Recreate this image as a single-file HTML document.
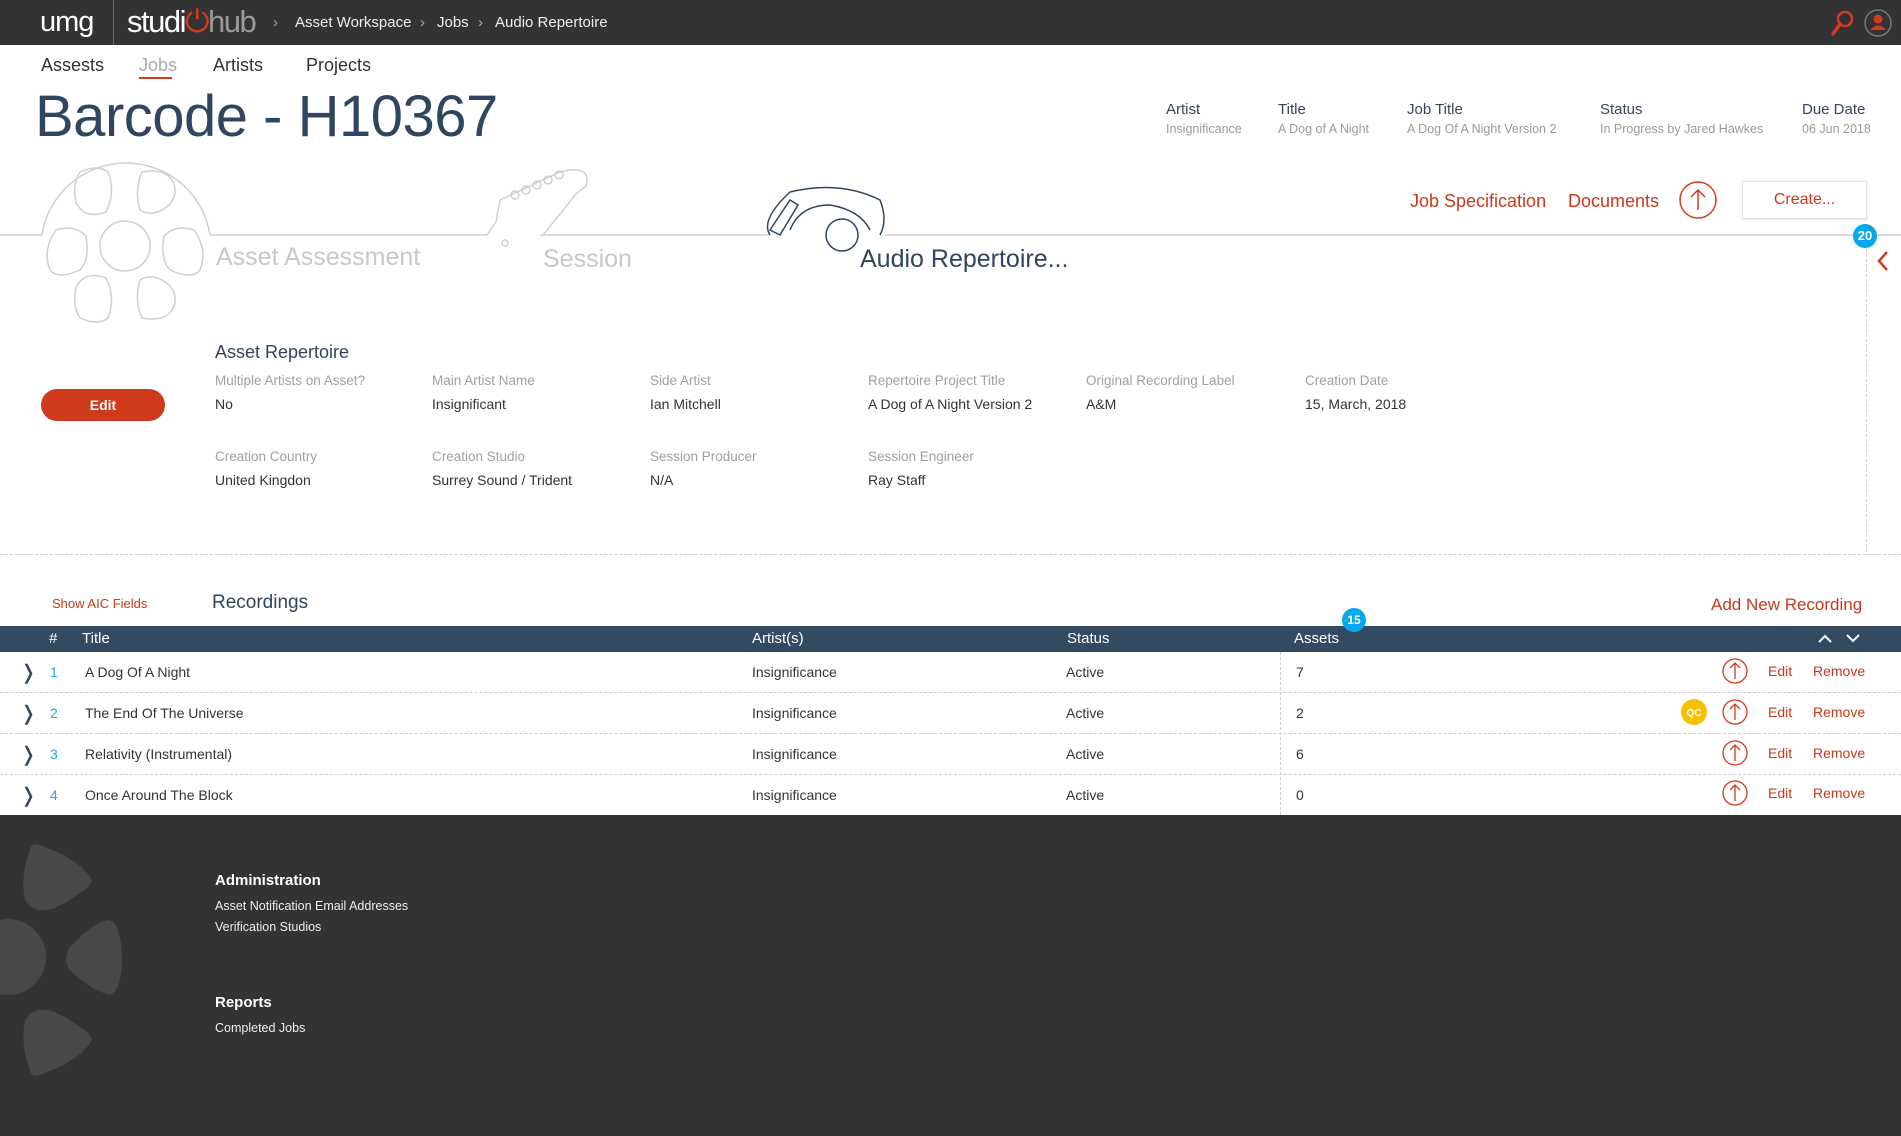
<!DOCTYPE html>
<html><head><meta charset="utf-8"><style>
*{margin:0;padding:0;box-sizing:border-box}
body{width:1901px;height:1136px;position:relative;background:#fff;font-family:"Liberation Sans",sans-serif;overflow:hidden;color:#333}
.a{position:absolute;white-space:nowrap}
.top{position:absolute;left:0;top:0;width:1901px;height:45px;background:#333}
.red{color:#c9381c}
.lbl{font-size:13.5px;color:#a0a0a0}
.val{font-size:14px;color:#333}
.ml{font-size:15px;color:#34465e}
.mv{font-size:12.5px;color:#9a9a9a}
.row{position:absolute;left:0;width:1901px;height:41px;border-bottom:1px dashed #ccc}
.row span{position:absolute;top:12px;font-size:14px;color:#333}
.foot{position:absolute;left:0;top:815px;width:1901px;height:321px;background:#333}
</style></head><body>
<div class="top"></div>
<div class="a" style="left:40px;top:6px;font-size:29px;color:#fff;letter-spacing:-1px">umg</div>
<div class="a" style="left:113px;top:0;width:1px;height:45px;background:#666"></div>
<div class="a" style="left:127px;top:4px;font-size:31px;color:#fff;letter-spacing:-1.5px">studi<span style="color:#d63a1e">&#x23FB;</span><span style="color:#999">hub</span></div>
<div class="a" style="left:273px;top:14px;font-size:15px;color:#aaa">›</div>
<div class="a" style="left:295px;top:14px;font-size:15px;color:#eee">Asset Workspace</div>
<div class="a" style="left:420px;top:14px;font-size:15px;color:#aaa">›</div>
<div class="a" style="left:437px;top:14px;font-size:15px;color:#eee">Jobs</div>
<div class="a" style="left:478px;top:14px;font-size:15px;color:#aaa">›</div>
<div class="a" style="left:495px;top:14px;font-size:15px;color:#eee">Audio Repertoire</div>
<svg class="a" style="left:1830px;top:9px" width="26" height="28"><circle cx="15" cy="10" r="7" fill="none" stroke="#d63a1e" stroke-width="2.5"/><line x1="10" y1="15" x2="3" y2="25" stroke="#d63a1e" stroke-width="3.5" stroke-linecap="round"/></svg>
<svg class="a" style="left:1863px;top:8px" width="30" height="30"><circle cx="15" cy="15" r="13" fill="none" stroke="#777" stroke-width="1.5"/><circle cx="15" cy="11" r="4.5" fill="#d63a1e"/><path d="M7 22 Q15 13 23 22 Z" fill="#d63a1e"/></svg>

<div class="a" style="left:41px;top:55px;font-size:18px;color:#333">Assests</div>
<div class="a" style="left:139px;top:55px;font-size:18px;color:#aaa">Jobs</div>
<div class="a" style="left:139px;top:77px;width:33px;height:2px;background:#d63a1e"></div>
<div class="a" style="left:213px;top:55px;font-size:18px;color:#333">Artists</div>
<div class="a" style="left:306px;top:55px;font-size:18px;color:#333">Projects</div>
<div class="a" style="left:35px;top:83px;font-size:58px;color:#2f4560;letter-spacing:-0.5px">Barcode - H10367</div>

<div class="a ml" style="left:1166px;top:101px">Artist</div><div class="a mv" style="left:1166px;top:122px">Insignificance</div>
<div class="a ml" style="left:1278px;top:101px">Title</div><div class="a mv" style="left:1278px;top:122px">A Dog of A Night</div>
<div class="a ml" style="left:1407px;top:101px">Job Title</div><div class="a mv" style="left:1407px;top:122px">A Dog Of A Night Version 2</div>
<div class="a ml" style="left:1600px;top:101px">Status</div><div class="a mv" style="left:1600px;top:122px">In Progress by Jared Hawkes</div>
<div class="a ml" style="left:1802px;top:101px">Due Date</div><div class="a mv" style="left:1802px;top:122px">06 Jun 2018</div>

<svg class="a" style="left:0;top:150px" width="1901" height="180">
<g fill="none" stroke="#cfcfcf" stroke-width="1.5">
<path d="M0 85 H42 M210 85 H487 M540 85 H770 M885 85 H1901"/>
<path d="M42 85 A85 85 0 0 1 210 85"/>
<circle cx="125" cy="96" r="25"/>
<path d="M80 22 q18 -8 28 0 q8 20 -2 40 q-22 8 -30 -10 q-4 -18 4 -30z"/>
<path d="M142 22 q22 -4 30 8 q8 14 -4 26 q-16 12 -28 4 q-6 -20 2 -38z"/>
<path d="M56 80 q18 -6 30 6 q4 24 -6 34 q-22 10 -30 0 q-8 -20 6 -40z"/>
<path d="M194 80 q-18 -6 -30 6 q-4 24 6 34 q22 10 30 0 q8 -20 -6 -40z"/>
<path d="M80 168 q18 8 28 0 q8 -20 -2 -40 q-22 -8 -30 10 q-4 18 4 30z"/>
<path d="M142 168 q22 4 30 -8 q8 -14 -4 -26 q-16 -12 -28 -4 q-6 20 2 38z"/>
<path d="M487 85 L496 72 L500 50 L560 22 Q592 14 586 36 L576 44 L543 85"/>
<circle cx="505" cy="93" r="3"/>
<circle cx="515" cy="45" r="4"/><circle cx="526" cy="40" r="4"/><circle cx="537" cy="35" r="4"/><circle cx="548" cy="30" r="4"/><circle cx="559" cy="25" r="4"/>
</g>
<g fill="none" stroke="#2f4560" stroke-width="1.5">
<path d="M770 85 Q760 70 790 42 Q840 30 880 50 Q888 70 880 85"/>
<path d="M790 80 Q800 55 830 55 Q860 60 870 80"/>
<path d="M770 80 L790 50 L798 55 L780 85z"/>
<circle cx="842" cy="85" r="16"/>
</g>
</svg>
<div class="a" style="left:216px;top:243px;font-size:25px;color:#c8c8c8">Asset Assessment</div>
<div class="a" style="left:543px;top:245px;font-size:25px;color:#c8c8c8">Session</div>
<div class="a" style="left:860px;top:245px;font-size:25px;color:#2f4560">Audio Repertoire...</div>

<div class="a red" style="left:1410px;top:191px;font-size:18px">Job Specification</div>
<div class="a red" style="left:1568px;top:191px;font-size:18px">Documents</div>
<svg class="a" style="left:1678px;top:180px" width="40" height="40"><circle cx="20" cy="20" r="18" fill="none" stroke="#d63a1e" stroke-width="1.5"/><path d="M20 30 V10 M13 17 L20 10 L27 17" fill="none" stroke="#d63a1e" stroke-width="1.5"/></svg>
<div class="a" style="left:1742px;top:181px;width:125px;height:38px;border:1px solid #e3e3e3;box-shadow:0 1px 3px rgba(0,0,0,.12);font-size:16px;color:#c9381c;text-align:center;line-height:36px">Create...</div>
<div class="a" style="left:1866px;top:249px;height:303px;border-left:1px dashed #ccc"></div>
<div class="a" style="left:1853px;top:224px;width:24px;height:24px;border-radius:50%;background:#05a8ec;color:#fff;font-size:13px;font-weight:bold;text-align:center;line-height:24px">20</div>
<svg class="a" style="left:1876px;top:250px" width="14" height="22"><path d="M11 2 L3 11 L11 20" fill="none" stroke="#d63a1e" stroke-width="2.5"/></svg>

<div class="a" style="left:215px;top:342px;font-size:18px;color:#2f4560">Asset Repertoire</div>
<div class="a" style="left:41px;top:389px;width:124px;height:32px;border-radius:16px;background:#cf3a1c;color:#fff;font-size:14px;font-weight:bold;text-align:center;line-height:32px">Edit</div>
<div class="a lbl" style="left:215px;top:373px">Multiple Artists on Asset?</div><div class="a val" style="left:215px;top:396px">No</div>
<div class="a lbl" style="left:432px;top:373px">Main Artist Name</div><div class="a val" style="left:432px;top:396px">Insignificant</div>
<div class="a lbl" style="left:650px;top:373px">Side Artist</div><div class="a val" style="left:650px;top:396px">Ian Mitchell</div>
<div class="a lbl" style="left:868px;top:373px">Repertoire Project Title</div><div class="a val" style="left:868px;top:396px">A Dog of A Night Version 2</div>
<div class="a lbl" style="left:1086px;top:373px">Original Recording Label</div><div class="a val" style="left:1086px;top:396px">A&amp;M</div>
<div class="a lbl" style="left:1305px;top:373px">Creation Date</div><div class="a val" style="left:1305px;top:396px">15, March, 2018</div>
<div class="a lbl" style="left:215px;top:449px">Creation Country</div><div class="a val" style="left:215px;top:472px">United Kingdon</div>
<div class="a lbl" style="left:432px;top:449px">Creation Studio</div><div class="a val" style="left:432px;top:472px">Surrey Sound / Trident</div>
<div class="a lbl" style="left:650px;top:449px">Session Producer</div><div class="a val" style="left:650px;top:472px">N/A</div>
<div class="a lbl" style="left:868px;top:449px">Session Engineer</div><div class="a val" style="left:868px;top:472px">Ray Staff</div>
<div class="a" style="left:0;top:554px;width:1901px;border-top:1px dashed #ccc"></div>

<div class="a red" style="left:52px;top:596px;font-size:13px">Show AIC Fields</div>
<div class="a" style="left:212px;top:592px;font-size:19px;color:#2f4560">Recordings</div>
<div class="a red" style="left:1711px;top:595px;font-size:17px">Add New Recording</div>

<div class="a" style="left:0;top:626px;width:1901px;height:26px;background:#334a63"></div>
<div class="a" style="left:49px;top:630px;font-size:15px;color:#fff">#</div>
<div class="a" style="left:82px;top:630px;font-size:15px;color:#fff">Title</div>
<div class="a" style="left:752px;top:630px;font-size:15px;color:#fff">Artist(s)</div>
<div class="a" style="left:1067px;top:630px;font-size:15px;color:#fff">Status</div>
<div class="a" style="left:1294px;top:630px;font-size:15px;color:#fff">Assets</div>
<div class="a" style="left:1342px;top:608px;width:24px;height:24px;border-radius:50%;background:#05a8ec;color:#fff;font-size:12px;font-weight:bold;text-align:center;line-height:24px">15</div>
<svg class="a" style="left:1817px;top:631px" width="44" height="14"><path d="M2 11 L8 5 L14 11 M30 4 L36 10 L42 4" fill="none" stroke="#fff" stroke-width="2"/></svg>

<div class="a" style="left:1280px;top:652px;height:163px;border-left:1px dashed #ccc"></div>

<div class="row" style="top:652px"><span style="left:20px;top:8px;font-size:20px;color:#34465e">&#x276D;</span><span style="left:50px;color:#1ea6e8">1</span><span style="left:85px">A Dog Of A Night</span><span style="left:752px">Insignificance</span><span style="left:1066px">Active</span><span style="left:1296px">7</span></div>
<div class="row" style="top:693px"><span style="left:20px;top:8px;font-size:20px;color:#34465e">&#x276D;</span><span style="left:50px;color:#1ea6e8">2</span><span style="left:85px">The End Of The Universe</span><span style="left:752px">Insignificance</span><span style="left:1066px">Active</span><span style="left:1296px">2</span></div>
<div class="row" style="top:734px"><span style="left:20px;top:8px;font-size:20px;color:#34465e">&#x276D;</span><span style="left:50px;color:#1ea6e8">3</span><span style="left:85px">Relativity (Instrumental)</span><span style="left:752px">Insignificance</span><span style="left:1066px">Active</span><span style="left:1296px">6</span></div>
<div class="row" style="top:775px;border-bottom:none"><span style="left:20px;top:8px;font-size:20px;color:#34465e">&#x276D;</span><span style="left:50px;color:#1ea6e8">4</span><span style="left:85px">Once Around The Block</span><span style="left:752px">Insignificance</span><span style="left:1066px">Active</span><span style="left:1296px">0</span></div>

<svg class="a" style="left:1680px;top:652px" width="200" height="163">
<g fill="none" stroke="#d63a1e" stroke-width="1.3">
<circle cx="55" cy="19" r="12"/><path d="M55 27 V11 M50 16 L55 11 L60 16"/>
<circle cx="55" cy="60" r="12"/><path d="M55 68 V52 M50 57 L55 52 L60 57"/>
<circle cx="55" cy="101" r="12"/><path d="M55 109 V93 M50 98 L55 93 L60 98"/>
<circle cx="55" cy="141" r="12"/><path d="M55 149 V133 M50 138 L55 133 L60 138"/>
</g>
<circle cx="14" cy="60" r="13" fill="#f6c000"/>
<text x="14" y="64" font-size="10" font-weight="bold" fill="#fff" text-anchor="middle" font-family="Liberation Sans">QC</text>
<g font-family="Liberation Sans" font-size="14" fill="#c9381c">
<text x="88" y="24">Edit</text><text x="133" y="24">Remove</text>
<text x="88" y="65">Edit</text><text x="133" y="65">Remove</text>
<text x="88" y="106">Edit</text><text x="133" y="106">Remove</text>
<text x="88" y="146">Edit</text><text x="133" y="146">Remove</text>
</g></svg>

<div class="foot"></div>
<svg class="a" style="left:0;top:830px" width="140" height="260">
<g fill="#484848">
<path d="M30 20 Q30 10 45 17 Q80 30 92 50 Q90 60 55 78 Q35 85 25 70 Q20 45 30 20z"/>
<circle cx="8" cy="127" r="38"/>
<path d="M108 90 Q120 90 122 125 Q122 160 110 165 Q90 160 70 140 Q60 125 75 112 Q95 92 108 90z"/>
<path d="M30 240 Q30 250 45 243 Q80 230 92 210 Q90 200 55 182 Q35 175 25 190 Q20 215 30 240z"/>
</g></svg>
<div class="a" style="left:215px;top:872px;font-size:15px;font-weight:bold;color:#fff">Administration</div>
<div class="a" style="left:215px;top:899px;font-size:12.5px;color:#eee">Asset Notification Email Addresses</div>
<div class="a" style="left:215px;top:920px;font-size:12.5px;color:#eee">Verification Studios</div>
<div class="a" style="left:215px;top:994px;font-size:15px;font-weight:bold;color:#fff">Reports</div>
<div class="a" style="left:215px;top:1021px;font-size:12.5px;color:#eee">Completed Jobs</div>
</body></html>
